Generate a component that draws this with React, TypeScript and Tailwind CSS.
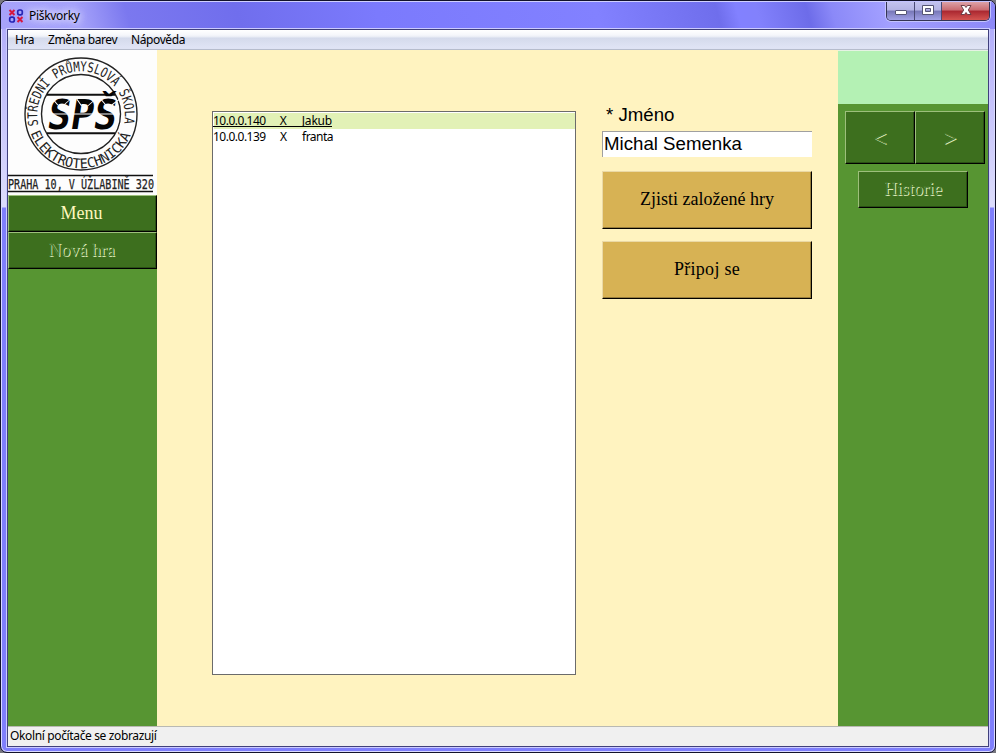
import React from "react";

const ui = "font-['Noto_Sans','Open_Sans',sans-serif] text-[12px] leading-[16px] whitespace-pre";
const serif = "font-['Liberation_Serif',serif]";
const etched =
  "text-[#47792b] [text-shadow:1px_1px_0_#dbe8b8]";
const greenButton =
  "flex items-center justify-center bg-[#3d6f1e] border-t border-l border-t-[#9dbf7b] border-l-[#9dbf7b] border-b border-r border-b-black border-r-black shadow-[inset_-1px_-1px_0_#2b5015]";
const goldButton =
  "h-[58px] pb-[2px] flex items-center justify-center bg-[#d7b254] text-[18px] border-t border-l border-t-[#ead9a6] border-l-[#ead9a6] border-b border-r border-b-black border-r-black shadow-[inset_-1px_-1px_0_#987e3b]";

function AppIcon() {
  return (
    <svg width="16" height="16" viewBox="0 0 16 16" fill="none" strokeWidth="2">
      <path d="M1.500 2l5 5M6.500 2l-5 5M9.500 9l5 5M14.500 9l-5 5" stroke="#d5173f" />
      <rect x="9.700" y="2" width="4.600" height="4.800" rx="1.800" stroke="#2323b5" strokeWidth="1.700" />
      <rect x="1.700" y="9.200" width="4.600" height="4.800" rx="1.800" stroke="#2323b5" strokeWidth="1.700" />
    </svg>
  );
}

function SchoolLogo() {
  return (
    <svg width="149" height="145" viewBox="8 50 149 145" className="block bg-[#fdfdfd]" fontFamily="'DejaVu Sans Mono', monospace" fill="#222">
      <defs>
        <path id="ringTop" d="M38.400 125.200 A43.800 43.800 0 1 1 123.600 125.200" />
        <path id="ringBottom" d="M30 131 A53.500 53.500 0 0 0 132 131" />
      </defs>
      <circle cx="81" cy="114" r="56" fill="none" stroke="#222" strokeWidth="1.400" />
      <circle cx="81" cy="114" r="39.500" fill="none" stroke="#222" strokeWidth="1.400" />
      <path d="M47 94.700H115M47 133.200H115" stroke="#111" strokeWidth="2" />
      <text fontSize="13.500">
        <textPath href="#ringTop" textLength="156" lengthAdjust="spacingAndGlyphs">STŘEDNÍ PRŮMYSLOVÁ ŠKOLA</textPath>
      </text>
      <text fontSize="13.500">
        <textPath href="#ringBottom" startOffset="2" textLength="129" lengthAdjust="spacingAndGlyphs">ELEKTROTECHNICKÁ</textPath>
      </text>
      <g transform="translate(46 129) skewX(-9)">
        <text fontSize="41" fontWeight="bold" fill="#050505" textLength="69" lengthAdjust="spacingAndGlyphs">SPŠ</text>
        <path d="M0-15H71M2-30L8-24M20-30L14-24M2-14L8-9M14-21L21-15M26-30L32-23M45-30L38-23M50-30L56-24M69-30L62-24M50-14L56-9M62-21L69-15" stroke="#fdfdfd" strokeWidth="1" />
      </g>
      <path d="M8 175.500H153M8 191.500H153" stroke="#111" strokeWidth="1.300" />
      <text x="8" y="189" fontSize="14.500" stroke="#222" strokeWidth=".25" textLength="146" lengthAdjust="spacingAndGlyphs">PRAHA 10, V ÚŽLABINĚ 320</text>
    </svg>
  );
}

function WindowControls() {
  return (
    <div className="flex h-[19px] w-[104px] mr-[5px] rounded-b-[5px] border border-t-0 border-[#343454] overflow-hidden shadow-[0_0_0_1px_#c3c3ff]">
      <div className="w-[28px] border-r border-[#4a4a75] bg-[linear-gradient(#c3c3ef_0%,#b4b4e4_45%,#7777b7_50%,#a1a1e5_100%)] flex justify-center">
        <svg width="14" height="16" viewBox="0 0 14 16"><rect x="1.500" y="8.500" width="11" height="4" rx=".5" fill="#fff" stroke="#555574" /></svg>
      </div>
      <div className="w-[27px] border-r border-[#4a4a75] bg-[linear-gradient(#c3c3ef_0%,#b4b4e4_45%,#7777b7_50%,#a1a1e5_100%)] flex justify-center">
        <svg width="14" height="16" viewBox="0 0 14 16"><path fillRule="evenodd" d="M1.500 3.500H12.500V12.500H1.500ZM4.500 6.500V9.500H9.500V6.500Z" fill="#fff" stroke="#555574" /></svg>
      </div>
      <div className="flex-1 bg-[linear-gradient(#dda2a7_0%,#ca6b70_45%,#aa2730_50%,#d45551_100%)] flex justify-center">
        <svg width="14" height="16" viewBox="0 0 14 16"><path d="M2 3.500H5.500L7 5.500L8.500 3.500H12L9.300 8L12 12.500H8.500L7 10.500L5.500 12.500H2L4.700 8Z" fill="#fff" stroke="#62343d" strokeWidth=".9" /></svg>
      </div>
    </div>
  );
}

export default function App() {
  return (
    <div className="w-[996px] h-[753px] overflow-hidden bg-[#77777f]">
      <div className="w-[996px] h-[753px] rounded-[7px] border border-[#12122b] overflow-hidden flex flex-col bg-[linear-gradient(#a9a5fb_0px,#b9b5fb_50px,#dcdcfc_200px,#dcdcfc_206px,#7f7ffc_207px)] shadow-[inset_0_0_0_1px_#dadaff]">
        <header className="h-[28px] shrink-0 flex justify-between bg-[linear-gradient(75deg,#a7a3fb_0%,#a5a2fa_8%,#7b78ef_13%,#706eed_24%,#7b7afd_38%,#8281ff_60%,#6f6eec_72%,#8281ff_74%,#8281fc_76%,#6d6ce9_81%,#8b89f8_83.500%,#a3a0ff_89%,#8b87f7_100%)] border-t border-[#d0d0ff]">
          <div className="flex items-center pl-[7px] gap-[5px]">
            <AppIcon />
            <span className={`${ui} tracking-[-0.3px] [text-shadow:0_0_8px_#fff,0_0_8px_#fff]`}>Piškvorky</span>
          </div>
          <WindowControls />
        </header>
        <div className="mx-[6px] w-[982px] h-[718px] shrink-0 border border-[#40407c] flex flex-col shadow-[0_0_0_1px_#cbcbff]">
          <nav className="h-[20px] shrink-0 flex bg-[linear-gradient(#fff_0px,#f5f7fb_5px,#e8ecf5_7px,#d4daeb_8px,#dfe3f4_17px)] border-b border-[#b6bccc] pl-[7px] pt-[2px]">
            <span className={`${ui} w-[33px] tracking-[-0.4px]`}>Hra</span>
            <span className={`${ui} w-[83px] tracking-[-0.4px]`}>Změna barev</span>
            <span className={`${ui} tracking-[-0.4px]`}>Nápověda</span>
          </nav>
          <main className="flex h-[676px] bg-[#fff3c0]">
            <aside className="w-[149px] bg-[#579532]">
              <SchoolLogo />
              <div className={`${greenButton} ${serif} h-[37px] pr-[2px] text-[18px] text-[#fff8bd]`}>Menu</div>
              <div className={`${greenButton} ${serif} h-[37px] pr-[2px] text-[18px] ${etched}`}>Nová hra</div>
            </aside>
            <section className="flex-1 flex items-start pl-[55px] pt-[61px]">
              <div className="w-[364px] h-[564px] border border-[#6b6b6b] bg-white pt-px">
                <div className={`${ui} h-[16px] flex bg-[#e2f1b6] ml-px`}>
                  <span className="w-[119px] h-[14px] border-b border-black flex -ml-px tracking-[-0.5px]">
                    <span className="w-[67px]">10.0.0.140</span><span className="w-[22px]">X</span><span className="tracking-[-0.2px]">Jakub</span>
                  </span>
                </div>
                <div className={`${ui} h-[16px] flex tracking-[-0.5px]`}>
                  <span className="w-[67px]">10.0.0.139</span><span className="w-[22px]">X</span><span>franta</span>
                </div>
              </div>
              <form className="ml-[26px] w-[210px] flex flex-col -mt-[7px]">
                <label className="h-[27px] pl-[4px] font-['Liberation_Sans',sans-serif] text-[18.67px] leading-[22px]">* Jméno</label>
                <div className="h-[26px] bg-white border-t border-l border-[#a0a0a0] pl-px font-['Liberation_Sans',sans-serif] text-[18.67px] leading-[24px]">Michal Semenka</div>
                <div className={`${serif} ${goldButton} mt-[14px]`}>Zjisti založené hry</div>
                <div className={`${serif} ${goldButton} mt-[12px] tracking-[0.3px]`}>Připoj se</div>
              </form>
            </section>
            <aside className="w-[150px] bg-[#579532]">
              <div className="h-[54px] bg-[#b4f1b4] border-t border-[#e6f2e4]" />
              <div className="flex mt-[7px] ml-[7px]">
                <div className={`${greenButton} w-[70px] h-[53px] ${serif} text-[24px] ${etched}`}>&lt;</div>
                <div className={`${greenButton} w-[70px] h-[53px] ${serif} text-[24px] ${etched}`}>&gt;</div>
              </div>
              <div className={`${greenButton} mt-[7px] ml-[20px] w-[110px] h-[37px] ${serif} text-[18px] ${etched}`}>Historie</div>
            </aside>
          </main>
          <footer className={`${ui} flex-1 bg-[#f0f0f0] border-t border-[#b9b9b3] pl-[2px] pt-px tracking-[-0.36px]`}>Okolní počítače se zobrazují</footer>
        </div>
      </div>
    </div>
  );
}
